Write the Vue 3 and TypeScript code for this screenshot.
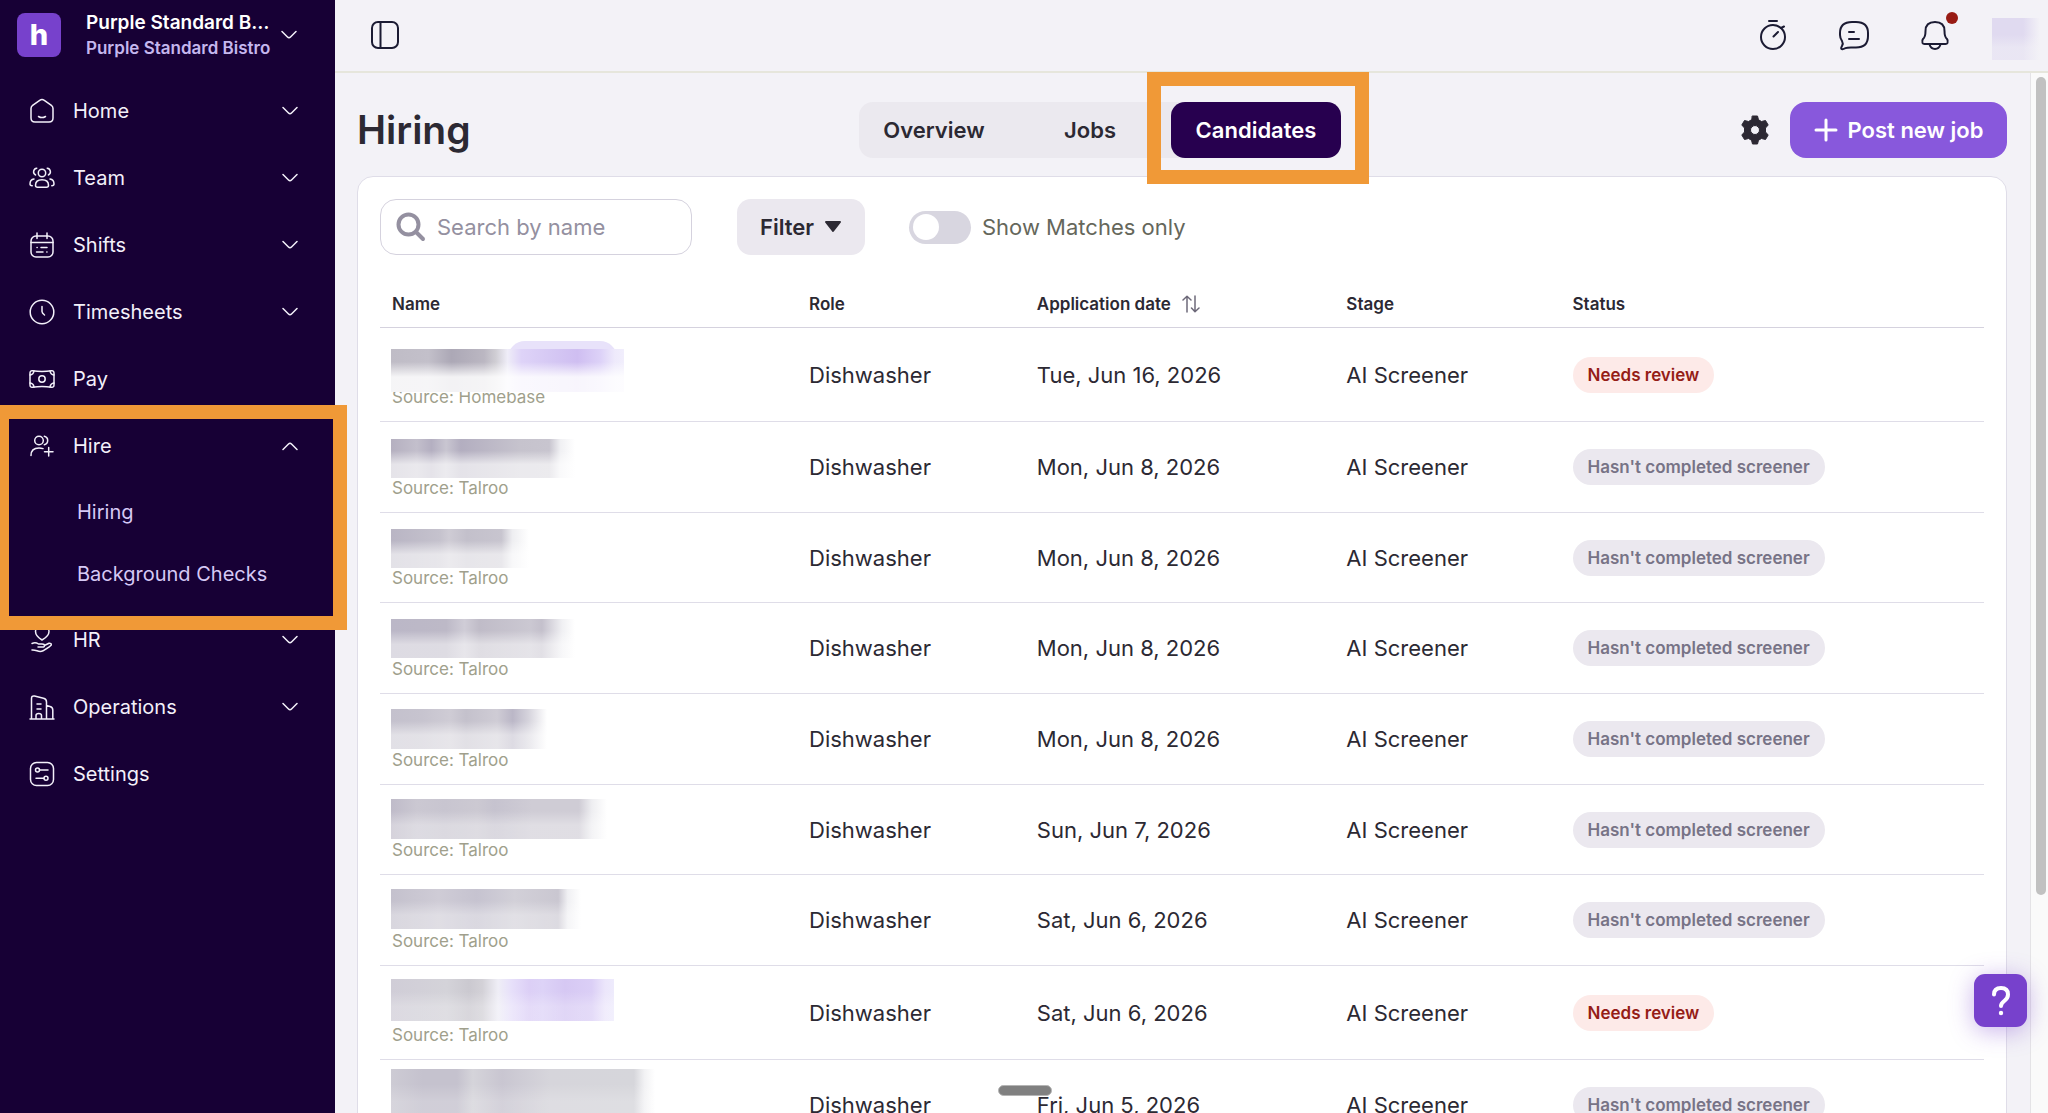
<script setup lang="ts">
import { ref } from 'vue'

interface NavItem {
  label: string
  icon: string
  chevron?: 'down' | 'up'
  children?: string[]
}

interface Mask {
  top: number
  width: number
  height: number
  fade: number
  stops: string
}

interface Candidate {
  source: string
  role: string
  date: string
  stage: string
  status: string
  tagged?: boolean
  mask: Mask
}

const nav: NavItem[] = [
  { label: 'Home', icon: 'home', chevron: 'down' },
  { label: 'Team', icon: 'team', chevron: 'down' },
  { label: 'Shifts', icon: 'shifts', chevron: 'down' },
  { label: 'Timesheets', icon: 'clock', chevron: 'down' },
  { label: 'Pay', icon: 'pay' },
  { label: 'Hire', icon: 'hire', chevron: 'up', children: ['Hiring', 'Background Checks'] },
  { label: 'HR', icon: 'hr', chevron: 'down' },
  { label: 'Operations', icon: 'operations', chevron: 'down' },
  { label: 'Settings', icon: 'settings' },
]

const icons: Record<string, string> = {
  home: '<path d="M2 10.5Q2 8.600 3.600 7.400L10.700 2.300Q13 .8 15.300 2.300L22.400 7.400Q24 8.600 24 10.500V20Q24 24 20 24H6Q2 24 2 20Z"/><path d="M9.500 18.500Q13 20.700 16.500 18.500"/>',
  team: '<circle cx="13" cy="8" r="3.700"/><path d="M6.500 20.300Q6.500 14.800 13 14.800T19.500 20.300Q19.500 22.300 17.500 22.300H8.500Q6.500 22.300 6.500 20.300Z"/><path d="M7.800 3.200A3.600 3.600 0 0 0 6.600 10M18.200 3.200A3.600 3.600 0 0 1 19.400 10M5 14Q1 14.600 1 19Q1 20.600 3.200 20.700M21 14Q25 14.600 25 19Q25 20.600 22.800 20.700"/>',
  shifts: '<rect x="2" y="4" width="22" height="21" rx="5"/><path d="M2 10.500H24M8 1V6.500M18 1V6.500M12 15.500H18M7.500 20H14"/><path d="M8 15.500h.2M17.800 20h.2"/>',
  clock: '<circle cx="13" cy="13" r="11.800"/><path d="M13 7.500V12.500Q13 14 15.500 16"/>',
  pay: '<path d="M3.500 4.800Q13 6 22.500 4.800Q25 4.500 25 7V19Q25 21.500 22.500 21.200Q13 20 3.500 21.200Q1 21.500 1 19V7Q1 4.500 3.500 4.800Z"/><circle cx="13" cy="13" r="3.200"/><path d="M1 9Q4.500 8.500 5 5M1 17Q4.500 17.500 5 21M25 9Q21.500 8.500 21 5M25 17Q21.500 17.500 21 21"/>',
  hire: '<circle cx="10" cy="7.500" r="4.300"/><path d="M15.300 3.300A4.300 4.300 0 0 1 15.300 11.700M2 22.500Q2 15 10 15Q12 15 14 15.600M15.500 18.800H24M19.700 14.500V23"/>',
  hr: '<path d="M13 13Q6.500 9 6.500 4.500Q6.500 0 10 0Q12 0 13 1.800Q14 0 16.500 0Q20 0 20 4.500Q20 9 13 13Z"/><path d="M3 16.500Q6.500 15 9.500 17H13Q15.500 17 15.500 18.700T13 20H9M15.300 18.500L20 16.300Q22.500 16 22.300 18Q22 19 14 23.800Q11.500 25 8 23.800Q5 22.800 3 23"/>',
  operations: '<path d="M1 25H25M2.500 25V4.500Q2.500 1.500 5.500 2L14.500 4.300Q17.500 5 17.500 8V25M17.500 11.500L21 12.500Q23.800 13.300 23.800 16V25M8 10H12M8 15H12M7 25V21.500Q7 19.500 9.700 19.500T12.500 21.500V25"/>',
  settings: '<rect x="1.500" y="1.500" width="23" height="23" rx="6"/><circle cx="8.500" cy="9" r="2"/><path d="M10.500 9H19M7 17.300H15"/><circle cx="17" cy="17.300" r="2"/>',
}

const greys = '#b5b0c0, #c3bfcc 14%, #b4afc1 22%, #c9c6d1 30%, #b3aec0 38%, #c6c3cd 70%, #c8c5cf'
const light = '#c4c1cd, #cfccd6 25%, #c6c3d0 45%, #d2d0d8 65%, #cac7d1'
const screener = "Hasn't completed screener"

const candidates: Candidate[] = [
  { source: 'Homebase', role: 'Dishwasher', date: 'Tue, Jun 16, 2026', stage: 'AI Screener', status: 'Needs review', tagged: true,
    mask: { top: 21, width: 233, height: 43, fade: 85, stops: '#bfbcc6, #c3c0ca 16%, #aca8b6 26%, #bbb7c2 40%, #d0ced4 45%, #efedf8 50%, #ded3f8 56%, #d6c9f4 68%, #cfbef1 80%, #ddd2f8 90%, #eeeafb 96%, #f1eefc' } },
  { source: 'Talroo', role: 'Dishwasher', date: 'Mon, Jun 8, 2026', stage: 'AI Screener', status: screener,
    mask: { top: 17, width: 184, height: 39, fade: 65, stops: `${greys} 86%, #f0f0f3 92%, #fff` } },
  { source: 'Talroo', role: 'Dishwasher', date: 'Mon, Jun 8, 2026', stage: 'AI Screener', status: screener,
    mask: { top: 16, width: 138, height: 39, fade: 60, stops: '#b9b5c4, #c5c2cd 35%, #cfccd5 42%, #c3c0cb 55%, #c8c5cf 80%, #eeeef1 88%, #fff' } },
  { source: 'Talroo', role: 'Dishwasher', date: 'Mon, Jun 8, 2026', stage: 'AI Screener', status: screener,
    mask: { top: 16, width: 184, height: 39, fade: 50, stops: '#bbb7c7, #bdb9c7 30%, #d0cdd7 40%, #c0bcc8 48%, #cbc8d2 76%, #c4c0cc 82%, #f0f0f3 93%, #fff' } },
  { source: 'Talroo', role: 'Dishwasher', date: 'Mon, Jun 8, 2026', stage: 'AI Screener', status: screener,
    mask: { top: 15, width: 156, height: 40, fade: 50, stops: '#c4c1cd, #c7c4cf 20%, #cfccd5 38%, #c4c1cc 48%, #cfccd5 68%, #bbb7c7 78%, #d5d3dc 88%, #fff' } },
  { source: 'Talroo', role: 'Dishwasher', date: 'Sun, Jun 7, 2026', stage: 'AI Screener', status: screener,
    mask: { top: 14, width: 216, height: 40, fade: 35, stops: '#bfbbc9, #cbc8d2 12%, #c8c5d0 25%, #ccc9d2 40%, #c6c3cf 48%, #cfccd5 65%, #cfccd5 87%, #eeeef1 93%, #fff' } },
  { source: 'Talroo', role: 'Dishwasher', date: 'Sat, Jun 6, 2026', stage: 'AI Screener', status: screener,
    mask: { top: 14, width: 190, height: 40, fade: 35, stops: `${light} 88%, #f0f0f3 93%, #fff` } },
  { source: 'Talroo', role: 'Dishwasher', date: 'Sat, Jun 6, 2026', stage: 'AI Screener', status: 'Needs review', tagged: true,
    mask: { top: 13, width: 223, height: 42, fade: 25, stops: '#d0cdd7, #d4d3d9 25%, #cbc9d0 35%, #d3d1d7 41%, #efeef6 48%, #e7e0fa 54%, #dccff6 62%, #ddd3f7 68%, #d6c8f3 78%, #dbcff6 90%, #ece6fb 96%, #eeebfc' } },
  { source: 'Talroo', role: 'Dishwasher', date: 'Fri, Jun 5, 2026', stage: 'AI Screener', status: screener,
    mask: { top: 9, width: 264, height: 50, fade: 20, stops: '#cdcbd4, #c5c2ce 12%, #c5c2ce 25%, #d5d4da 31%, #c9c6d1 42%, #d6d5db 60%, #d6d6db 92%, #f2f2f4 96%, #fff' } },
]

function maskStyle(m: Mask) {
  const a = m.fade / 100
  return {
    top: `${m.top}px`,
    width: `${m.width}px`,
    height: `${m.height}px`,
    background: `linear-gradient(180deg, rgba(255,255,255,0) 30%, rgba(255,255,255,${a}) 65%, rgba(255,255,255,${a}) 100%), linear-gradient(90deg, ${m.stops})`,
  }
}

const search = ref('')
const matchesOnly = ref(false)
</script>

<template>
  <div class="app">
    <aside class="sidebar">
      <button class="company" type="button">
        <span class="logo">h</span>
        <span class="company-text">
          <span class="company-name">Purple Standard B…</span>
          <span class="company-sub">Purple Standard Bistro</span>
        </span>
        <svg class="chev" viewBox="0 0 16 10"><path d="M1 1.500L6.500 7Q8 8.500 9.500 7L15 1.500" /></svg>
      </button>
      <nav class="nav">
        <template v-for="item in nav" :key="item.label">
          <button class="nav-item" type="button">
            <svg class="nav-icon" viewBox="0 0 26 26" v-html="icons[item.icon]"></svg>
            <span class="nav-label">{{ item.label }}</span>
            <svg v-if="item.chevron" class="chev" :class="item.chevron" viewBox="0 0 16 10"><path d="M1 1.500L6.500 7Q8 8.500 9.500 7L15 1.500" /></svg>
          </button>
          <div v-if="item.children" class="subnav">
            <a v-for="child in item.children" :key="child" href="#">{{ child }}</a>
          </div>
        </template>
      </nav>
      <div class="highlight highlight-nav"></div>
    </aside>

    <div class="page">
      <header class="topbar">
        <button class="icon-btn" type="button" aria-label="Toggle sidebar">
          <svg width="28" height="28" viewBox="0 0 28 28"><rect x="1" y="1" width="26" height="26" rx="6" /><path d="M9.500 1V27" /></svg>
        </button>
        <div class="top-actions">
          <button class="icon-btn" type="button" aria-label="Timer">
            <svg width="30" height="32" viewBox="0 0 30 32"><circle cx="15" cy="18" r="12" /><path d="M11 2H19M15.500 17.500L20 13M23 9L26 7.500" /></svg>
          </button>
          <button class="icon-btn" type="button" aria-label="Messages">
            <svg width="32" height="32" viewBox="0 0 32 32"><path d="M14 3H18Q30 3 30 14V17Q30 28.500 18 28.500H13Q9 28.500 7.500 29.200Q3.500 31 3.200 29.500Q3 28.700 4 27Q5.500 24.500 4 22Q2 19 2 16V14Q2 3 14 3Z" /><path d="M11 13H16M11 20H21" /></svg>
          </button>
          <button class="icon-btn bell" type="button" aria-label="Notifications">
            <svg width="30" height="32" viewBox="0 0 30 32"><path d="M5.500 12Q5.500 3 15 3T24.500 12Q24.500 18 27 20Q28.300 21.500 27.500 23.800Q27 25 25.500 25H4.500Q3 25 2.500 23.800Q1.700 21.500 3 20Q5.500 18 5.500 12Z" /><path d="M9.500 25.500Q11 30 15 30T20.500 25.500" /></svg>
            <span class="dot"></span>
          </button>
          <span class="avatar"></span>
        </div>
      </header>

      <div class="body">
        <main class="content">
          <div class="heading">
            <h1>Hiring</h1>
            <div class="tabs" role="tablist">
              <button type="button" role="tab" class="tab tab-overview">Overview</button>
              <button type="button" role="tab" class="tab tab-jobs">Jobs</button>
              <button type="button" role="tab" class="tab tab-active" aria-selected="true">Candidates</button>
              <div class="highlight highlight-tab"></div>
            </div>
            <div class="heading-actions">
              <button class="icon-btn gear" type="button" aria-label="Hiring settings">
                <svg width="28" height="30" viewBox="0 0 28 30"><path fill-rule="evenodd" d="M11.500 1H16.500L17.500 4.800L20.500 6.500L24.500 5.500L27.200 10L24.500 13V17L27.200 20L24.500 24.500L20.500 23.500L17.500 25.200L16.500 29H11.500L10.500 25.200L7.500 23.500L3.500 24.500L.8 20L3.500 17V13L.8 10L3.500 5.500L7.500 6.500L10.500 4.800ZM14 10.500A4.500 4.500 0 1 0 14 19.500A4.500 4.500 0 1 0 14 10.500Z" /></svg>
              </button>
              <button class="post" type="button">
                <svg width="24" height="24" viewBox="0 0 24 24"><path d="M12 2V22M2 12H22" /></svg>
                Post new job
              </button>
            </div>
          </div>

          <section class="card">
            <div class="toolbar">
              <label class="search">
                <svg width="30" height="30" viewBox="0 0 30 30"><circle cx="12.500" cy="12.500" r="10" /><path d="M20 20L27 27" /></svg>
                <input v-model="search" type="text" placeholder="Search by name" aria-label="Search by name" />
              </label>
              <button class="filter" type="button">
                Filter
                <svg width="18" height="12" viewBox="0 0 18 12"><path d="M2 1H16L9 10Z" /></svg>
              </button>
              <label class="matches">
                <input v-model="matchesOnly" type="checkbox" role="switch" />
                <span>Show Matches only</span>
              </label>
            </div>

            <table>
              <thead>
                <tr>
                  <th class="c-name">Name</th>
                  <th class="c-role">Role</th>
                  <th class="c-date">
                    <span class="sortable">Application date
                      <svg width="18" height="18" viewBox="0 0 18 18"><path d="M5 17V1.500M1 5L5 1.200L9 5M13 1V16.500M9.500 13L13 16.800L17 13" /></svg>
                    </span>
                  </th>
                  <th class="c-stage">Stage</th>
                  <th>Status</th>
                </tr>
              </thead>
              <tbody>
                <tr v-for="(c, i) in candidates" :key="i" :class="{ tagged: c.tagged }">
                  <td class="name">
                    <span v-if="i === 0" class="tag"></span>
                    <span class="source">Source: {{ c.source }}</span>
                    <span class="mask" :style="maskStyle(c.mask)"></span>
                  </td>
                  <td>{{ c.role }}</td>
                  <td>{{ c.date }}</td>
                  <td>{{ c.stage }}</td>
                  <td><span class="pill" :class="{ alert: c.tagged }">{{ c.status }}</span></td>
                </tr>
              </tbody>
            </table>
          </section>
        </main>
        <div class="scroll"><div class="thumb"></div></div>
      </div>
    </div>

    <div class="grabber"></div>
    <button class="help" type="button" aria-label="Help">
      <svg width="24" height="34" viewBox="0 0 24 34"><path d="M5 10.500Q5 4 12 4T19 10.500Q19 14 15.500 16.800Q12 19.500 12 22" /><circle cx="12" cy="29" r="2.200" /></svg>
    </button>
  </div>
</template>

<style>
body {
  margin: 0;
  overflow: hidden;
}
</style>

<style scoped>
* {
  box-sizing: border-box;
}
.app {
  position: relative;
  display: flex;
  height: 100vh;
  overflow: hidden;
  background: #f3f2f7;
  color: #2c2933;
  font-family: Inter, "Liberation Sans", sans-serif;
  font-size: 22px;
}
button {
  padding: 0;
  border: 0;
  background: none;
  color: inherit;
  font: inherit;
}
svg {
  flex: none;
  display: block;
  fill: none;
  stroke: currentColor;
  stroke-width: 2;
  stroke-linecap: round;
  stroke-linejoin: round;
}

/* Sidebar */
.sidebar {
  position: relative;
  flex: none;
  width: 335px;
  background: #170035;
  color: #f3f0fa;
}
.company {
  display: flex;
  align-items: center;
  width: 100%;
  height: 71px;
  padding: 0 39px 2px 17px;
  text-align: left;
}
.logo {
  flex: none;
  width: 44px;
  height: 44px;
  border-radius: 8px;
  background: #7741cc;
  color: #fff;
  font-size: 29px;
  font-weight: 800;
  line-height: 44px;
  text-align: center;
}
.company-text {
  flex: none;
  width: 186px;
  margin: 0 9px 0 25px;
}
.company-name,
.company-sub {
  display: block;
  white-space: nowrap;
  font-weight: 600;
}
.company-name {
  color: #fff;
  font-size: 19px;
  line-height: 26px;
}
.company-sub {
  color: #c5b7ee;
  font-size: 17px;
  line-height: 24px;
}
.chev {
  width: 16px;
  height: 10px;
  stroke-width: 1.5;
}
.chev.up {
  transform: rotate(180deg);
}
.nav {
  padding-top: 6px;
}
.nav-item {
  display: flex;
  align-items: center;
  width: 100%;
  height: 67px;
  padding: 0 37px 0 29px;
  font-size: 20px;
  font-weight: 400;
  text-align: left;
}
.nav-icon {
  width: 26px;
  height: 26px;
  margin-right: 18px;
  stroke-width: 1.5;
}
.nav-label {
  flex: 1;
}
.subnav {
  padding: 2px 0 1px;
}
.subnav a {
  display: block;
  padding-left: 77px;
  color: #d6c9f5;
  font-size: 20px;
  line-height: 62px;
  text-decoration: none;
}
.highlight {
  position: absolute;
  border: 14px solid #f09937;
  pointer-events: none;
}
.highlight-nav {
  z-index: 3;
  top: 405px;
  left: -5px;
  width: 352px;
  height: 225px;
}

/* Top bar */
.page {
  display: flex;
  flex: 1;
  flex-direction: column;
  min-width: 0;
}
.topbar {
  display: flex;
  flex: none;
  align-items: center;
  justify-content: space-between;
  height: 73px;
  padding: 0 8px 2px 36px;
  border-bottom: 2px solid #e6e6dc;
  color: #1b1b33;
}
.top-actions {
  display: flex;
  align-items: center;
  gap: 50px;
}
.bell {
  position: relative;
}
.dot {
  position: absolute;
  top: -7px;
  right: -8px;
  width: 12px;
  height: 12px;
  border-radius: 50%;
  background: #981b14;
}
.avatar {
  width: 48px;
  height: 42px;
  margin: 8px 0 0 -8px;
  background: linear-gradient(180deg, rgba(243, 242, 247, 0) 40%, rgba(243, 242, 247, 0.5) 70%), linear-gradient(90deg, #e0daf0 65%, #f3f2f7);
}

/* Main column */
.body {
  display: flex;
  flex: 1;
  min-height: 0;
}
.content {
  flex: 1;
  min-width: 0;
  padding: 29px 23px 0 22px;
}
.heading {
  display: flex;
  align-items: center;
  height: 56px;
  margin-bottom: 18px;
}
h1 {
  width: 502px;
  margin: 0;
  font-size: 39px;
  font-weight: 600;
  line-height: 56px;
}
.tabs {
  position: relative;
  display: flex;
  gap: 33px;
  border-radius: 14px;
  background: #ebe9ef;
}
.tab {
  height: 56px;
  border-radius: 14px;
  font-weight: 600;
}
.tab-overview {
  width: 150px;
}
.tab-jobs {
  width: 96px;
}
.tab-active {
  width: 170px;
  background: #27004f;
  color: #fff;
}
.highlight-tab {
  top: -30px;
  right: -28px;
  width: 222px;
  height: 112px;
}
.heading-actions {
  display: flex;
  align-items: center;
  gap: 21px;
  margin-left: auto;
}
.gear svg {
  fill: currentColor;
  stroke-width: 1;
}
.post {
  display: flex;
  align-items: center;
  justify-content: center;
  gap: 10px;
  width: 217px;
  height: 56px;
  border-radius: 16px;
  background: #8858dc;
  color: #fff;
  font-weight: 600;
}
.post svg {
  stroke-width: 3;
}
.card {
  padding: 22px;
  border: 1px solid #dfdde8;
  border-radius: 16px;
  background: #fff;
}
.toolbar {
  display: flex;
  align-items: center;
  height: 56px;
  margin-bottom: 25px;
}
.search {
  display: flex;
  align-items: center;
  gap: 11px;
  width: 312px;
  height: 56px;
  margin-right: 45px;
  padding: 0 15px;
  border: 1px solid #d5d2de;
  border-radius: 16px;
  color: #9490a0;
}
.search svg {
  stroke-width: 4;
}
.search input {
  width: 100%;
  min-width: 0;
  padding: 0;
  border: 0;
  outline: 0;
  background: none;
  font: inherit;
}
.search input::placeholder {
  color: #9490a0;
  opacity: 1;
}
.filter {
  display: flex;
  align-items: center;
  justify-content: center;
  gap: 10px;
  width: 128px;
  height: 56px;
  margin-right: 44px;
  border-radius: 14px;
  background: #ebe8ef;
  font-weight: 600;
}
.filter svg {
  fill: currentColor;
}
.matches {
  display: flex;
  align-items: center;
  gap: 11px;
  color: #65675b;
}
.matches input {
  display: flex;
  align-items: center;
  width: 62px;
  height: 33px;
  margin: 0;
  padding: 4px;
  border-radius: 17px;
  background: #d8d6e0;
  appearance: none;
}
.matches input::before {
  width: 26px;
  height: 26px;
  border-radius: 50%;
  background: #fff;
  content: "";
}

/* Table */
table {
  width: 100%;
  border-collapse: separate;
  border-spacing: 0;
  table-layout: fixed;
}
.c-name {
  width: 26%;
}
.c-role {
  width: 14.2%;
}
.c-date {
  width: 19.3%;
}
.c-stage {
  width: 14.1%;
}
th {
  height: 48px;
  padding: 0 12px;
  border-bottom: 1px solid #d5d2de;
  font-size: 17px;
  font-weight: 600;
  text-align: left;
}
.sortable {
  display: flex;
  align-items: center;
  gap: 11px;
}
.sortable svg {
  color: #6d6979;
  stroke-width: 1.5;
}
td {
  height: 91px;
  padding: 0 12px;
  border-bottom: 1px solid #dfdde8;
  white-space: nowrap;
}
tr:nth-child(3n) td {
  height: 90px;
}
tr.tagged td {
  height: 94px;
}
.name {
  position: relative;
  padding: 0 12px 13px;
  vertical-align: bottom;
}
.source {
  color: #a09f8c;
  font-size: 17px;
  line-height: 22px;
}
.mask {
  position: absolute;
  left: 11px;
}
.tag {
  position: absolute;
  top: 13px;
  left: 128px;
  width: 109px;
  height: 34px;
  border-radius: 17px;
  background: #e8e2fa;
}
.pill {
  display: inline-block;
  padding: 0 15px;
  border-radius: 18px;
  background: #ebe8ef;
  color: #777386;
  font-size: 17px;
  font-weight: 600;
  line-height: 36px;
  vertical-align: middle;
}
.pill.alert {
  background: #fdeae8;
  color: #951d17;
}

/* Scrollbar and floating controls */
.scroll {
  flex: none;
  width: 18px;
  padding: 4px 2px 0 5px;
  border-left: 1px solid #e4e3e6;
  background: #fafafa;
}
.thumb {
  height: 79%;
  border-radius: 6px;
  background: #c1c1c1;
}
.grabber {
  position: absolute;
  bottom: 17px;
  left: 998px;
  width: 54px;
  height: 11px;
  border: 1px solid #b5b5b5;
  border-radius: 6px;
  background: #808080;
}
.help {
  position: absolute;
  right: 21px;
  bottom: 86px;
  display: flex;
  align-items: center;
  justify-content: center;
  width: 53px;
  height: 53px;
  border-radius: 11px;
  background: #7741cc;
  box-shadow: 0 4px 24px rgba(119, 65, 204, 0.4);
  color: #fff;
}
.help svg {
  stroke-width: 4;
}
.help circle {
  fill: currentColor;
  stroke: none;
}
</style>
